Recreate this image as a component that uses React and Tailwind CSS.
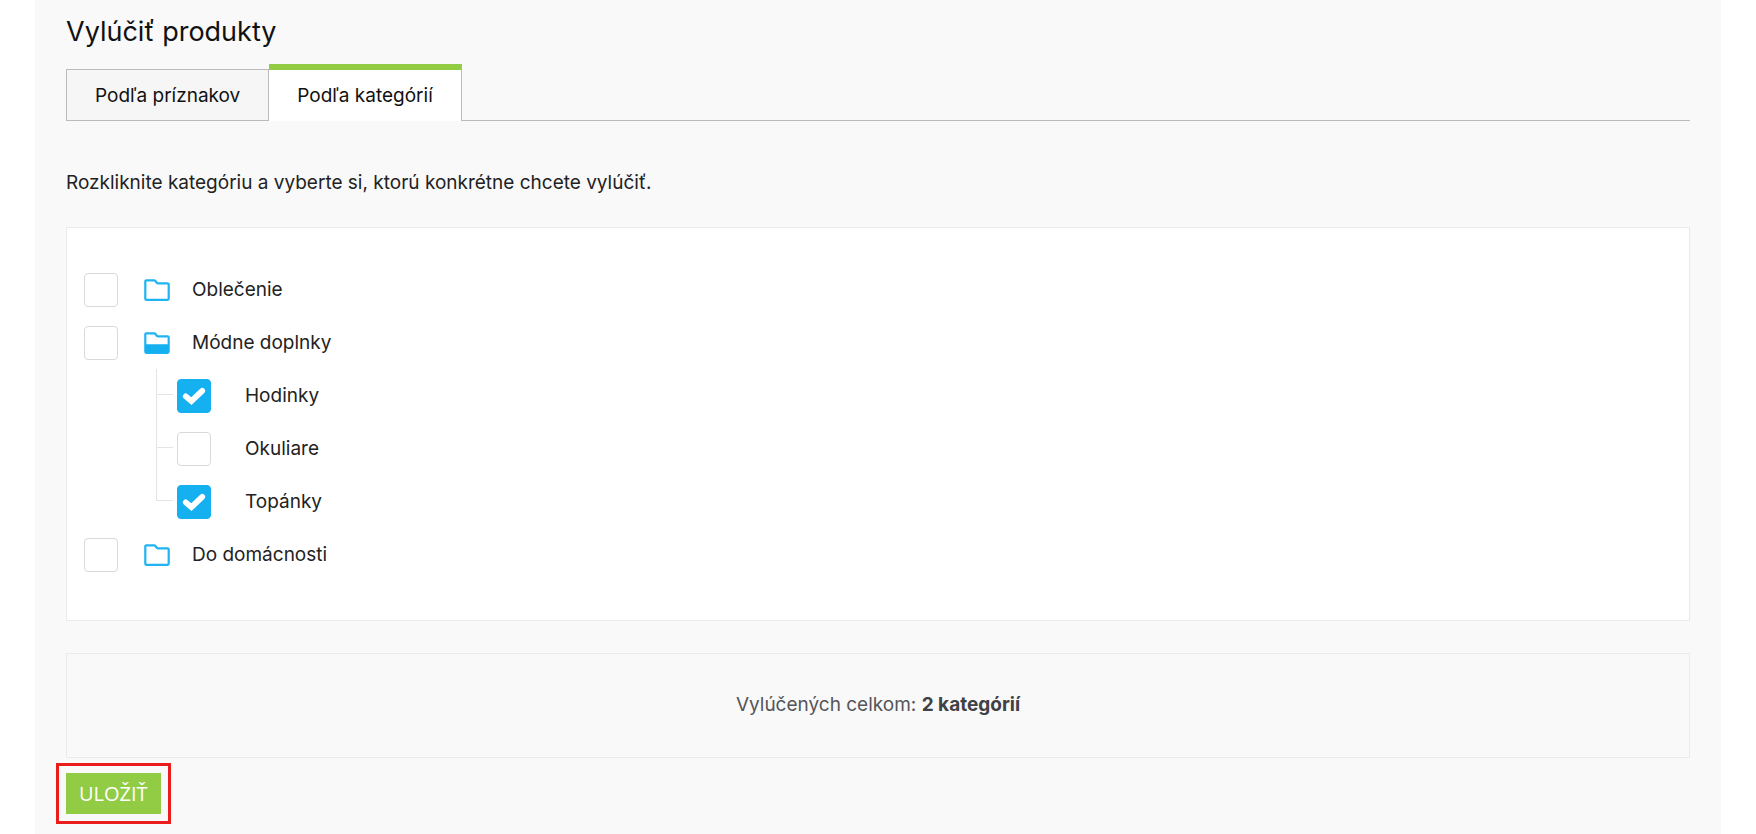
import { useState } from "react";

const tree = [
  { id: "oblecenie", name: "Oblečenie" },
  {
    id: "doplnky",
    name: "Módne doplnky",
    children: [
      { id: "hodinky", name: "Hodinky" },
      { id: "okuliare", name: "Okuliare" },
      { id: "topanky", name: "Topánky" },
    ],
  },
  { id: "domacnost", name: "Do domácnosti" },
];

function Folder({ open }) {
  return (
    <svg className="h-[22px] w-[26px] shrink-0" viewBox="0 0 26 22" fill="none" aria-hidden="true">
      <path
        d="M2.4 1.3H10.2Q10.8 1.3 11.2 1.8L13 4Q13.4 4.4 14 4.4H23.5Q24.7 4.4 24.7 5.6V19.6Q24.7 20.8 23.5 20.8H2.4Q1.3 20.8 1.3 19.6V2.4Q1.3 1.3 2.4 1.3Z"
        stroke="#1fb4f1"
        strokeWidth="2.2"
        strokeLinejoin="round"
      />
      {open && <path d="M1.3 12.2H24.7V19.6Q24.7 20.8 23.5 20.8H2.4Q1.3 20.8 1.3 19.6Z" fill="#14b0f0" />}
    </svg>
  );
}

function Check({ id, checked, onChange }) {
  return (
    <span className="grid size-[34px] shrink-0 place-items-center">
      <input
        id={id}
        type="checkbox"
        checked={checked}
        onChange={onChange}
        className="peer col-start-1 row-start-1 size-[34px] appearance-none rounded border border-[#d9d9d9] bg-white checked:border-[#14b0f0] checked:bg-[#14b0f0]"
      />
      <svg
        className="pointer-events-none invisible col-start-1 row-start-1 h-5 w-6 peer-checked:visible"
        viewBox="0 0 24 20"
        fill="none"
        stroke="#fff"
        strokeWidth="5.8"
        strokeLinecap="round"
        strokeLinejoin="miter"
        aria-hidden="true"
      >
        <path d="M3.8 10.4 9.4 15.2 20.2 4.8" />
      </svg>
    </span>
  );
}

export default function App() {
  const [tab, setTab] = useState("kategorie");
  const [selected, setSelected] = useState(["hodinky", "topanky"]);
  const toggle = (id) =>
    setSelected((s) => (s.includes(id) ? s.filter((x) => x !== id) : [...s, id]));
  const tabs = [
    ["priznaky", "Podľa príznakov"],
    ["kategorie", "Podľa kategórií"],
  ];

  return (
    <div className="min-h-screen bg-white px-[35px] font-['Inter',sans-serif] text-[19px] leading-6 text-[#222]">
      <main className="min-h-screen bg-[#f9f9f9] px-[31px] pt-3 pb-2.5">
        <h1 className="text-[27px] leading-10 text-[#111]">Vylúčiť produkty</h1>

        <div role="tablist" className="mt-3 flex items-end border-b border-[#bbb]">
          {tabs.map(([id, label]) => (
            <button
              key={id}
              type="button"
              role="tab"
              aria-selected={tab === id}
              onClick={() => setTab(id)}
              className={
                tab === id
                  ? "-mb-px h-[57px] border-t-6 border-r border-[#bbb] border-t-[#92cc45] bg-white px-7 text-[#111]"
                  : "h-[51px] border-t border-x border-[#bbb] bg-[#f6f6f6] px-7 pt-1 pb-0.5 text-[#111]"
              }
            >
              {label}
            </button>
          ))}
        </div>

        <p className="mt-[50px]">Rozkliknite kategóriu a vyberte si, ktorú konkrétne chcete vylúčiť.</p>

        <ul className="mt-8 border border-[#ebebeb] bg-white px-[17px] pt-[35px] pb-[39px]">
          {tree.map((node) => (
            <li key={node.id}>
              <div className="flex h-[53px] items-center">
                <Check id={node.id} checked={selected.includes(node.id)} onChange={() => toggle(node.id)} />
                <label htmlFor={node.id} className="flex items-center gap-[22px] pl-[26px]">
                  <Folder open={!!node.children} />
                  {node.name}
                </label>
              </div>
              {node.children && (
                <ul className="pl-[72px]">
                  {node.children.map((child, i) => (
                    <li key={child.id} className="flex h-[53px] items-center">
                      <span
                        className={
                          i === node.children.length - 1
                            ? "flex h-full w-[21px] flex-col"
                            : "flex h-full w-[21px] flex-col border-l border-[#e4e4e4]"
                        }
                      >
                        <span
                          className={
                            i === node.children.length - 1
                              ? "mr-1 h-[26px] border-b border-l border-[#e4e4e4]"
                              : "mr-1 h-[26px] border-b border-[#e4e4e4]"
                          }
                        />
                      </span>
                      <Check id={child.id} checked={selected.includes(child.id)} onChange={() => toggle(child.id)} />
                      <label htmlFor={child.id} className="pl-[34px]">
                        {child.name}
                      </label>
                    </li>
                  ))}
                </ul>
              )}
            </li>
          ))}
        </ul>

        <p className="mt-8 border border-[#ebebeb] pt-[39px] pb-10 text-center text-[#555559]">
          Vylúčených celkom: <strong className="font-bold text-[#404045]">{selected.length} kategórií</strong>
        </p>

        <div className="mt-[5px] -ml-2.5 w-fit border-3 border-[#ea1c1c] p-[7px]">
          <button
            type="button"
            className="block h-[41px] bg-[#92cc45] px-[13px] font-['Open_Sans',sans-serif] text-[20px] leading-6 text-white"
          >
            ULOŽIŤ
          </button>
        </div>
      </main>
    </div>
  );
}
